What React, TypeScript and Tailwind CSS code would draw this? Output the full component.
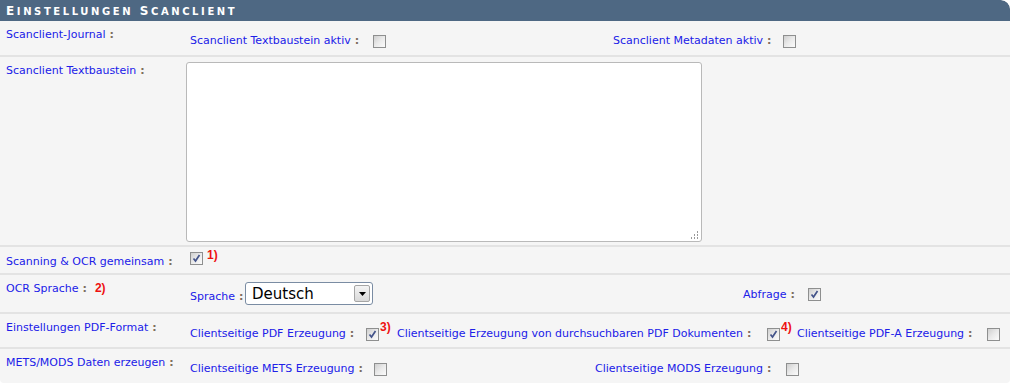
import type { ReactNode } from 'react';

const font = { fontFamily: '"DejaVu Sans", Verdana, sans-serif' };

function Colon() {
  return <span className="ml-[4px] font-bold text-[11px] text-[#7d6e5e]">:</span>;
}

function Check({ checked = false }: { checked?: boolean }) {
  return (
    <span className="inline-flex h-[13px] w-[13px] shrink-0 items-center justify-center border border-[#8e8f8f] bg-gradient-to-br from-[#cfcfcf] via-[#eaeaea] to-[#fbfbfb]">
      {checked && (
        <svg width="11" height="11" viewBox="0 0 11 11">
          <path d="M2.5 5.5 L4.5 8 L8.5 2" fill="none" stroke="#44548a" strokeWidth="1.7" />
        </svg>
      )}
    </span>
  );
}

function Note({ children }: { children: ReactNode }) {
  return (
    <span className="font-bold text-[12px] leading-none text-[#ee1111]" style={{ fontFamily: '"Liberation Sans", Arial, sans-serif' }}>
      {children}
    </span>
  );
}

function Label({ children, className = '' }: { children: ReactNode; className?: string }) {
  return (
    <span className={`shrink-0 text-[11px] text-[#2020e8] ${className}`}>
      {children}
      <Colon />
    </span>
  );
}

function Row({ label, extra, children, className }: { label: string; extra?: ReactNode; children?: ReactNode; className: string }) {
  return (
    <div className={`flex border-b-2 border-[#e3e3e3] text-[11px] leading-[14px] ${className}`}>
      <div className="w-[186px] shrink-0 pl-[6px]">
        <Label>{label}</Label>
        {extra}
      </div>
      <div className="flex-1 pl-[4px]">{children}</div>
    </div>
  );
}

export default function App() {
  return (
    <div className="h-[383px] w-[1010px] overflow-hidden rounded-tr-[9px] rounded-b-[4px] bg-[#f5f5f5]" style={font}>
      {/* Header */}
      <div className="flex h-[21px] items-center rounded-tr-[9px] bg-[#4e6883] pl-[6px]">
        <h2 className="text-[11px] font-bold uppercase leading-none tracking-[2.6px] text-white">
          <span className="text-[12px]">E</span>
          <span className="text-[10px]">INSTELLUNGEN</span>{' '}
          <span className="text-[12px]">S</span>
          <span className="text-[10px]">CANCLIENT</span>
        </h2>
      </div>

      {/* Scanclient-Journal */}
      <Row label="Scanclient-Journal" className="h-[36px] pt-[7px]">
        <div className="flex items-center pt-[6px]">
          <div className="flex w-[423px] items-center">
            <Label className="w-[183px]">Scanclient Textbaustein aktiv</Label>
            <Check />
          </div>
          <div className="flex items-center">
            <Label className="w-[170px]">Scanclient Metadaten aktiv</Label>
            <Check />
          </div>
        </div>
      </Row>

      {/* Textbaustein */}
      <Row label="Scanclient Textbaustein" className="h-[190px] pt-[7px]">
        <div className="relative -ml-[4px] -mt-[2px] h-[180px] w-[516px]">
          <textarea className="h-full w-full resize-none rounded-[3px] border border-[#b9b9b9] bg-white outline-none" />
          <svg className="absolute bottom-[3px] right-[3px]" width="8" height="8" viewBox="0 0 8 8">
            <rect x="6" y="0" width="1" height="2" fill="#9a9a9a" />
            <rect x="3" y="3" width="1" height="2" fill="#9a9a9a" />
            <rect x="6" y="3" width="1" height="2" fill="#9a9a9a" />
            <rect x="0" y="6" width="1" height="2" fill="#9a9a9a" />
            <rect x="3" y="6" width="1" height="2" fill="#9a9a9a" />
            <rect x="6" y="6" width="1" height="2" fill="#9a9a9a" />
          </svg>
        </div>
      </Row>

      {/* Scanning & OCR */}
      <Row label="Scanning & OCR gemeinsam" className="h-[28px] pt-[8px]">
        <div className="-mt-[3px] flex items-start gap-[4px]">
          <Check checked />
          <span className="-mt-[3px]">
            <Note>1)</Note>
          </span>
        </div>
      </Row>

      {/* OCR Sprache */}
      <Row
        label="OCR Sprache"
        extra={
          <span className="ml-[8px]">
            <Note>2)</Note>
          </span>
        }
        className="h-[39px] pt-[7px]"
      >
        <div className="flex items-center">
          <div className="flex w-[553px] items-center">
            <Label className="w-[55px] pt-[6px]">Sprache</Label>
            <div className="flex h-[23px] w-[128px] items-center justify-between rounded-[3px] border border-[#7a8ca3] bg-white pl-[6px] pr-[2px]">
              <span className="text-[15px] text-black">Deutsch</span>
              <span className="flex h-[17px] w-[16px] items-center justify-center rounded-[2px] border border-[#a5a5a5] bg-gradient-to-b from-[#f4f4f4] to-[#d9d9d9]">
                <svg width="7" height="4" viewBox="0 0 7 4">
                  <path d="M0 0 H7 L3.5 4 Z" fill="#000" />
                </svg>
              </span>
            </div>
          </div>
          <div className="flex items-center pt-[2px]">
            <Label className="w-[65px]">Abfrage</Label>
            <Check checked />
          </div>
        </div>
      </Row>

      {/* PDF-Format */}
      <Row label="Einstellungen PDF-Format" className="h-[35px] pt-[7px]">
        <div className="flex items-center pt-[6px]">
          <div className="flex w-[207px] items-center">
            <Label className="w-[176px]">Clientseitige PDF Erzeugung</Label>
            <Check checked />
            <span className="-mt-[12px] ml-[1px]">
              <Note>3)</Note>
            </span>
          </div>
          <div className="flex w-[400px] items-center">
            <Label className="w-[370px]">Clientseitige Erzeugung von durchsuchbaren PDF Dokumenten</Label>
            <Check checked />
            <span className="-mt-[12px] ml-[1px]">
              <Note>4)</Note>
            </span>
          </div>
          <div className="flex items-center">
            <Label className="w-[190px]">Clientseitige PDF-A Erzeugung</Label>
            <Check />
          </div>
        </div>
      </Row>

      {/* METS/MODS */}
      <div className="flex h-[34px] pt-[7px] text-[11px] leading-[14px]">
        <div className="w-[186px] shrink-0 pl-[6px]">
          <Label>METS/MODS Daten erzeugen</Label>
        </div>
        <div className="flex flex-1 items-center self-start pl-[4px] pt-[6px]">
          <div className="flex w-[405px] items-center">
            <Label className="w-[184px]">Clientseitige METS Erzeugung</Label>
            <Check />
          </div>
          <div className="flex items-center">
            <Label className="w-[191px]">Clientseitige MODS Erzeugung</Label>
            <Check />
          </div>
        </div>
      </div>
    </div>
  );
}
